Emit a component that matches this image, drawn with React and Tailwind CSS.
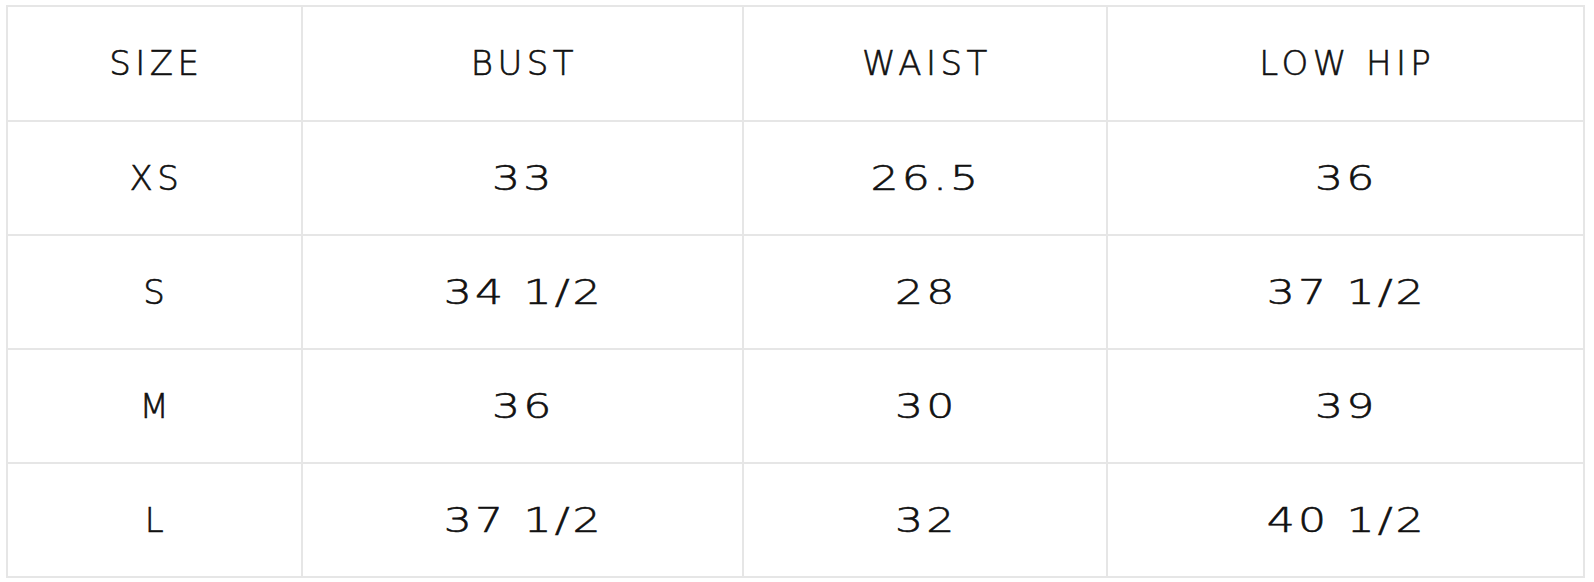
const headers = ['SIZE', 'BUST', 'WAIST', 'LOW HIP'];

const rows = [
  ['XS', '33', '26.5', '36'],
  ['S', '34 1/2', '28', '37 1/2'],
  ['M', '36', '30', '39'],
  ['L', '37 1/2', '32', '40 1/2'],
];

const colWidths = ['w-[295px]', 'w-[442px]', 'w-[364px]', 'w-[478px]'];

export default function App() {
  return (
    <div className="w-[1594px] h-[582px] bg-white pt-[5px] pl-[6px]" style={{ fontFamily: '"DejaVu Sans", sans-serif' }}>
      <table className="w-[1579px] border-collapse text-[#111] font-light [-webkit-text-stroke:0.6px_#111]">
        <thead>
          <tr className="h-[115px]">
            {headers.map((h, i) => (
              <th key={h} className={`${colWidths[i]} border-2 border-[#e6e6e6] text-center font-light text-[34px] tracking-[0.13em] pl-[4px]`}>
                {h}
              </th>
            ))}
          </tr>
        </thead>
        <tbody>
          {rows.map((r) => (
            <tr key={r[0]} className="h-[114px]">
              {r.map((v, i) =>
                i === 0 ? (
                  <td key={i} className="border-2 border-[#e6e6e6] text-center text-[34px] tracking-[0.13em] pl-[4px]">
                    {v}
                  </td>
                ) : (
                  <td key={i} className="border-2 border-[#e6e6e6] text-center text-[34px]">
                    <span className="inline-block scale-x-[1.3] tracking-[0.07em] pl-[2px]">{v}</span>
                  </td>
                )
              )}
            </tr>
          ))}
        </tbody>
      </table>
    </div>
  );
}
